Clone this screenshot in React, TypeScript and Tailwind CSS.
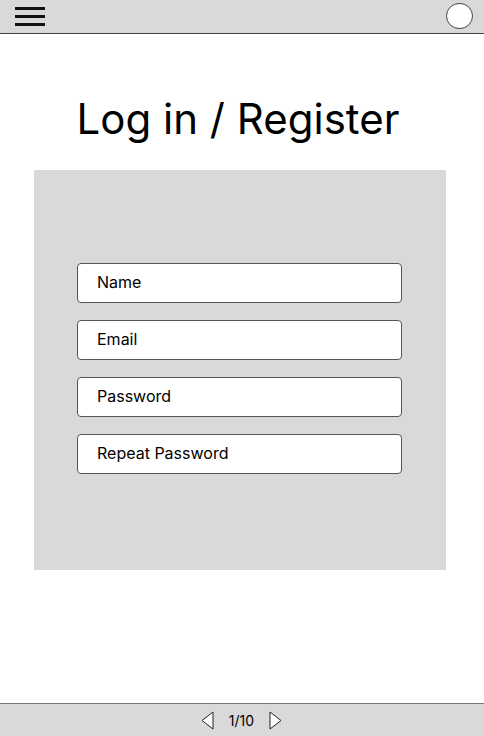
export default function App() {
  const fields = ["Name", "Email", "Password", "Repeat Password"];

  return (
    <div className="flex h-[736px] w-[484px] flex-col bg-white font-['Inter',sans-serif] text-black">
      <header className="flex h-[34px] shrink-0 items-center justify-between border-b border-[#444] bg-[#d9d9d9] pl-[15px] pr-[11px]">
        <div className="flex w-[30px] flex-col gap-[5.5px]">
          <span className="h-[2.5px] bg-[#111]" />
          <span className="h-[2.5px] bg-[#111]" />
          <span className="h-[2.5px] bg-[#111]" />
        </div>
        <div className="mt-[-1px] h-[26px] w-[27px] rounded-full border border-[#444] bg-white" />
      </header>

      <main className="flex flex-1 flex-col items-center">
        <h1 className="mt-[60px] mr-[8px] text-[42px] leading-[50px]">Log in / Register</h1>

        <div className="mt-[26px] ml-[-4px] flex h-[400px] w-[412px] flex-col gap-[17px] bg-[#d9d9d9] pl-[43px] pr-[44px] pt-[93px]">
          {fields.map((f) => (
            <div
              key={f}
              className="flex h-[40px] items-center rounded-[4px] border border-[#555] bg-white pb-[2px] pl-[19px] text-[16px]"
            >
              {f}
            </div>
          ))}
        </div>
      </main>

      <footer className="flex h-[33px] shrink-0 items-center justify-center gap-[15px] border-t border-[#777] bg-[#d9d9d9] pr-[1px]">
        <svg width="13" height="19" viewBox="0 0 13 19" fill="none">
          <path d="M12 1 L1 9.5 L12 18 Z" stroke="#222" strokeWidth="1" fill="white" strokeLinejoin="round" />
        </svg>
        <span className="text-[14px]">1/10</span>
        <svg width="13" height="19" viewBox="0 0 13 19" fill="none">
          <path d="M1 1 L12 9.5 L1 18 Z" stroke="#222" strokeWidth="1" fill="white" strokeLinejoin="round" />
        </svg>
      </footer>
    </div>
  );
}
